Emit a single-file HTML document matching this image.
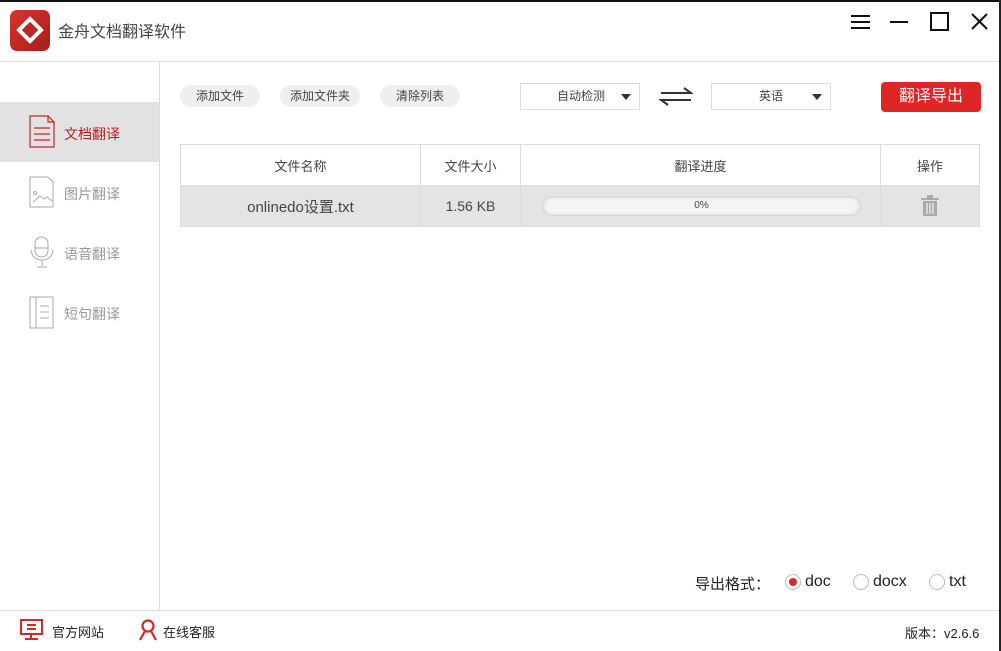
<!DOCTYPE html>
<html><head><meta charset="utf-8"><style>
*{margin:0;padding:0;box-sizing:border-box}
body{width:1001px;height:651px;overflow:hidden;background:#fff;font-family:"Liberation Sans","Noto Sans CJK SC",sans-serif;position:relative;color:#333}
.a{position:absolute}
.btn{position:absolute;top:85px;height:22px;background:#efefef;border-radius:11px;font-size:12px;color:#444;text-align:center;line-height:22px}
.sel{position:absolute;top:83px;height:27px;border:1px solid #dcdcdc;font-size:12px;color:#444;line-height:25px}
.tri{position:absolute;right:8px;top:10px;width:0;height:0;border-left:5px solid transparent;border-right:5px solid transparent;border-top:6px solid #333}
.nav{position:absolute;left:0;width:159px;height:60px;font-size:14px;color:#999}
.nav span{position:absolute;left:64px;top:22px}
td{border:1px solid #ddd;text-align:center;font-size:14px;color:#444}
</style></head><body>
<div class="a" style="left:0;top:0;width:1001px;height:2px;background:#111"></div>
<div class="a" style="left:999px;top:0;width:2px;height:651px;background:#222"></div>
<div class="a" style="left:10px;top:10px;width:40px;height:41px;border-radius:7px;background:linear-gradient(135deg,#d9342c,#a51e1a)"></div>
<svg class="a" style="left:10px;top:10px" width="40" height="41" viewBox="0 0 40 41"><g fill="none" stroke="#fff" stroke-width="4"><path d="M20 9 L31 20 L20 31 L9 20 Z"/></g><path d="M16 16 L24 24 M20 14 L27 21 M13 19 L20 26" stroke="#b82720" stroke-width="2.5"/></svg>
<div class="a" style="left:58px;top:18px;font-size:16px;color:#444">金舟文档翻译软件</div>
<svg class="a" style="left:848px;top:10px" width="145" height="25"><g stroke="#111" stroke-width="2" fill="none"><path d="M3 6h19M3 12h19M3 18h19"/><path d="M42 12h18"/><rect x="83" y="3" width="17" height="17"/><path d="M124 4l15 15M139 4l-15 15"/></g></svg>
<div class="a" style="left:0;top:61px;width:999px;height:1px;background:#ddd"></div>
<div class="a" style="left:159px;top:62px;width:1px;height:548px;background:#ddd"></div>
<div class="nav" style="top:102px;background:#e2e2e2;color:#b51f1f"><span>文档翻译</span></div>
<svg class="a" style="left:28px;top:115px" width="28" height="33"><g fill="none" stroke="#c0282a" stroke-width="1.2"><path d="M2 1h18l6 6v25H2z M20 1v6h6"/><path d="M6 13h16M6 19h16M6 25h16"/></g></svg>
<div class="nav" style="top:162px"><span>图片翻译</span></div>
<svg class="a" style="left:29px;top:176px" width="26" height="32"><g fill="none" stroke="#aaa" stroke-width="1"><path d="M1 1h18l5 5v25H1z"/><path d="M4 26l7-6 4 3 3-2 5 4"/><circle cx="6" cy="17" r="1.5"/></g></svg>
<div class="nav" style="top:222px"><span>语音翻译</span></div>
<svg class="a" style="left:29px;top:236px" width="26" height="33"><g fill="none" stroke="#aaa" stroke-width="1"><rect x="6" y="1" width="13" height="20" rx="6.5"/><path d="M6 12h13M2 14a11 10 0 0 0 22 0M13 25v5M8 31h10"/></g></svg>
<div class="nav" style="top:282px"><span>短句翻译</span></div>
<svg class="a" style="left:29px;top:296px" width="26" height="33"><g fill="none" stroke="#aaa" stroke-width="1"><rect x="1" y="1" width="23" height="31"/><path d="M7 1v31M11 10h9M11 16h9M11 22h9"/></g></svg>
<div class="btn" style="left:180px;width:80px">添加文件</div>
<div class="btn" style="left:280px;width:80px">添加文件夹</div>
<div class="btn" style="left:380px;width:80px">清除列表</div>
<div class="sel" style="left:520px;width:120px;padding-left:36px">自动检测<div class="tri"></div></div>
<svg class="a" style="left:659px;top:86px" width="34" height="20"><g stroke="#333" stroke-width="2" fill="none"><path d="M2 7h30l-7-5M32 14H2l7 5"/></g></svg>
<div class="sel" style="left:711px;width:120px;padding-left:47px">英语<div class="tri"></div></div>
<div class="a" style="left:881px;top:82px;width:100px;height:30px;background:#e02525;border-radius:4px;color:#fff;font-size:16px;text-align:center;line-height:30px">翻译导出</div>
<table class="a" style="left:180px;top:144px;width:800px;border-collapse:collapse">
<tr style="height:41px"><td style="width:240px;font-size:13px">文件名称</td><td style="width:100px;font-size:13px">文件大小</td><td style="width:360px;font-size:13px">翻译进度</td><td style="font-size:13px">操作</td></tr>
<tr style="height:41px;background:#e4e4e4"><td style="font-size:15px">onlinedo设置.txt</td><td>1.56 KB</td><td><div style="margin:0 19px 0 21px;height:20px;border-radius:10px;background:#f4f4f4;border:1px solid #d6d6d6;box-shadow:inset 0 0 3px #ccc;font-size:10px;line-height:18px">0%</div></td><td>
<svg width="20" height="22" style="vertical-align:middle"><g fill="#aaa"><rect x="1" y="3" width="18" height="2"/><rect x="7" y="0" width="6" height="3"/><rect x="3" y="6" width="14" height="15"/></g><g stroke="#e4e4e4" stroke-width="1.5"><path d="M7 8v11M10 8v11M13 8v11"/></g></svg></td></tr>
</table>
<div class="a" style="left:695px;top:573px;font-size:15px;color:#222">导出格式：</div>
<div class="a" style="left:785px;top:574px;width:16px;height:16px;border:1px solid #bbb;border-radius:50%"></div>
<div class="a" style="left:789px;top:578px;width:8px;height:8px;background:#d92a2a;border-radius:50%"></div>
<div class="a" style="left:805px;top:573px;font-size:16px;color:#222">doc</div>
<div class="a" style="left:853px;top:574px;width:16px;height:16px;border:1px solid #bbb;border-radius:50%"></div>
<div class="a" style="left:873px;top:573px;font-size:16px;color:#222">docx</div>
<div class="a" style="left:929px;top:574px;width:16px;height:16px;border:1px solid #bbb;border-radius:50%"></div>
<div class="a" style="left:949px;top:573px;font-size:16px;color:#222">txt</div>
<div class="a" style="left:0;top:610px;width:999px;height:1px;background:#ddd"></div>
<svg class="a" style="left:19px;top:619px" width="26" height="22"><g fill="none" stroke="#d12a2a" stroke-width="2"><rect x="2" y="1" width="21" height="14"/><path d="M8 6h9M8 10h9M12 15v4M6 20h13"/></g></svg>
<div class="a" style="left:52px;top:622px;font-size:13px;color:#222">官方网站</div>
<svg class="a" style="left:137px;top:619px" width="22" height="22"><g fill="none" stroke="#d12a2a" stroke-width="2.2"><circle cx="11" cy="7" r="5.5"/><path d="M3 21l5-9M19 21l-5-9"/></g></svg>
<div class="a" style="left:163px;top:622px;font-size:13px;color:#222">在线客服</div>
<div class="a" style="left:905px;top:623px;font-size:13px;color:#222">版本：v2.6.6</div>
</body></html>
